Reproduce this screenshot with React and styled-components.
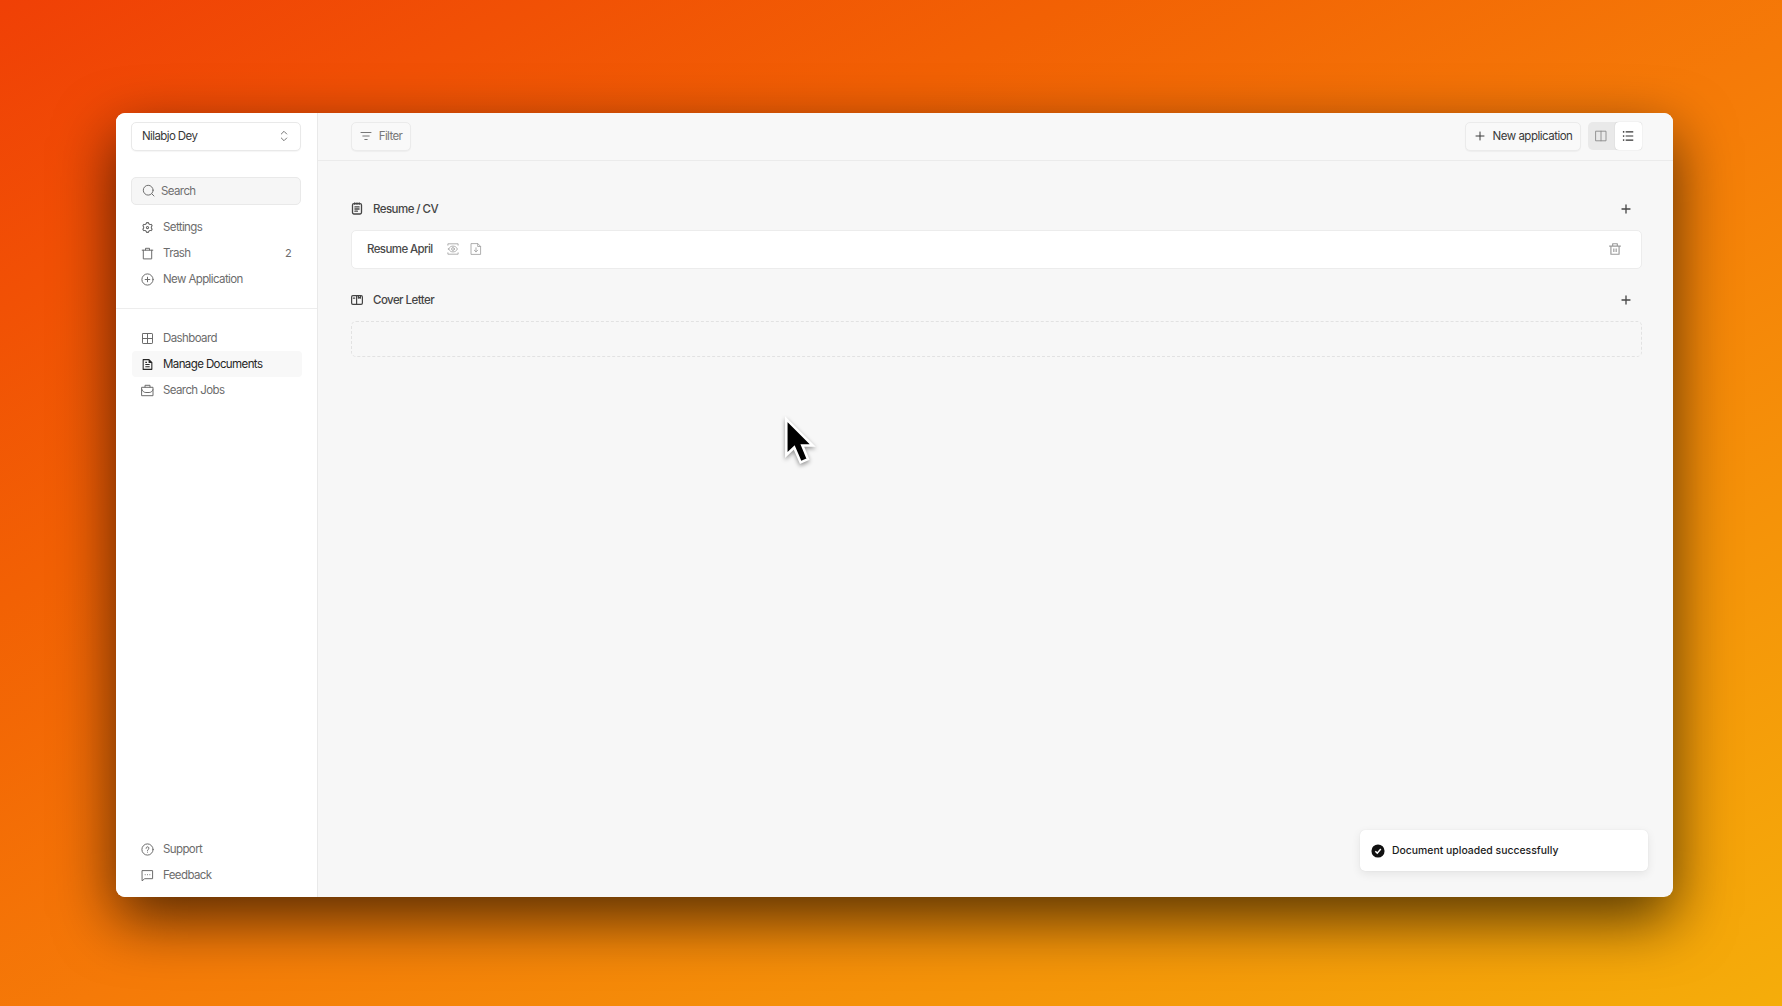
import React from "react";
import styled, { createGlobalStyle, css } from "styled-components";
import {
  RiSettings3Line,
  RiDeleteBinLine,
  RiFileTextLine,
  RiListUnordered,
} from "react-icons/ri";

const GlobalStyle = createGlobalStyle`
  * { box-sizing: border-box; }
  html, body { margin: 0; padding: 0; }
  body { font-family: Inter, "Liberation Sans", sans-serif; overflow: hidden; }
  button { font: inherit; letter-spacing: inherit; margin: 0; cursor: default; }
  svg { display: block; flex: none; }
`;

const Stage = styled.div`
  width: 100vw;
  height: 100vh;
  padding: 113px 109px 109px 116px;
  background: linear-gradient(to bottom right, #f04006 0%, #f26104 30%, #f57a08 52%, #f5ad0a 100%);
`;

const Window = styled.div`
  position: relative;
  display: flex;
  width: 100%;
  height: 100%;
  border-radius: 9px;
  background: #f7f7f7;
  box-shadow: 0 22px 60px rgba(0, 0, 0, 0.66);
  color: #3c3c3c;
  font-size: 11.5px;
  letter-spacing: -0.6px;
`;

const Sidebar = styled.aside`
  display: flex;
  flex-direction: column;
  width: 202px;
  flex: none;
  background: #fff;
  border-right: 1px solid #e9e9e9;
  border-radius: 9px 0 0 9px;
  padding-bottom: 9px;
`;

const SidebarTop = styled.div`
  height: 196px;
  padding: 9px 16px 0 15px;
  border-bottom: 1px solid #ededed;
`;

const fieldBox = css`
  display: flex;
  align-items: center;
  width: 100%;
  border: 1px solid #e9e9e9;
  border-radius: 5px;
`;

const AccountSelect = styled.button`
  ${fieldBox}
  justify-content: space-between;
  height: 29px;
  padding: 0 12px 1px 10px;
  background: #fff;
  color: #383838;
  box-shadow: 0 1px 1px rgba(0, 0, 0, 0.04);

  svg { color: #777; }
`;

const SearchField = styled.button`
  ${fieldBox}
  gap: 6px;
  height: 28px;
  margin: 26px 0 9px;
  padding: 0 10px 1px;
  background: #f6f6f6;
  color: #707070;
`;

const Nav = styled.nav`
  display: flex;
  flex-direction: column;
`;

const SidebarGroup = styled(Nav)`
  padding: 0 15px 0 16px;
  ${(p) => (p.$bottom ? "margin-top: auto;" : "margin-top: 16px;")}
`;

const NavItem = styled.a`
  display: flex;
  align-items: center;
  gap: 9px;
  height: 26px;
  padding: 0 10px 0 ${(p) => (p.$inset ? "10px" : "9px")};
  border-radius: 4px;
  color: ${(p) => (p.$active ? "#262626" : "#6c6c6c")};
  background: ${(p) => (p.$active ? "#f8f8f8" : "transparent")};
`;

const Count = styled.span`
  margin-left: auto;
  font-size: 11px;
`;

const Main = styled.main`
  flex: 1;
  min-width: 0;
  display: flex;
  flex-direction: column;
`;

const Toolbar = styled.header`
  display: flex;
  align-items: flex-start;
  height: 48px;
  padding: 9px 31px 0 33px;
  background: #f8f8f8;
  border-bottom: 1px solid #ebebeb;
  border-radius: 0 9px 0 0;
`;

const ToolButton = styled.button`
  display: flex;
  align-items: center;
  justify-content: center;
  gap: ${(p) => p.$gap};
  width: ${(p) => p.$width};
  height: 29px;
  padding: 0 0 1px;
  border: 1px solid #ebebeb;
  border-radius: 5px;
  background: #f9f9f9;
  color: ${(p) => p.$color};
  box-shadow: 0 1px 1px rgba(0, 0, 0, 0.04);
  ${(p) => p.$end && "margin-left: auto; padding-left: 1px; letter-spacing: -0.5px;"}
`;

const ViewToggle = styled.div`
  display: flex;
  width: 54px;
  height: 28px;
  margin-left: 7px;
  border-radius: 5px;
  background: #e9e9e9;
`;

const ViewOption = styled.button`
  display: flex;
  align-items: center;
  justify-content: center;
  width: 27px;
  height: 28px;
  padding: 0 1px 0 0;
  border: 0;
  border-radius: 4px;
  background: ${(p) => (p.$selected ? "#fff" : "transparent")};
  color: ${(p) => (p.$selected ? "#333" : "#8a8a8a")};
  ${(p) => p.$selected && "box-shadow: 0 0 1px rgba(0, 0, 0, 0.25);"}
`;

const Content = styled.div`
  padding: 34px 31px 0 33px;
`;

const SectionHeader = styled.div`
  display: flex;
  align-items: center;
  gap: 10px;
  height: 27px;
  margin-bottom: 8px;
  padding-right: 11px;
  font-weight: 500;
  letter-spacing: -0.55px;
  color: #454545;

  svg:last-child { margin-left: auto; }
`;

const DocumentRow = styled.div`
  display: flex;
  align-items: center;
  height: 39px;
  margin-bottom: 17px;
  padding: 0 19px 1px 15px;
  border: 1px solid #ececec;
  border-radius: 5px;
  background: #fff;
  font-weight: 500;
  color: #4a4a4a;
`;

const RowActions = styled.div`
  display: flex;
  align-items: center;
  flex: 1;
  gap: 11px;
  padding-left: 14px;
  color: #9a9a9a;

  svg:last-child { margin-left: auto; }
`;

const EmptySlot = styled.div`
  height: 36px;
  border: 1px dashed #e2e2e2;
  border-radius: 5px;
`;

const Toast = styled.div`
  position: absolute;
  right: 25px;
  bottom: 26px;
  display: flex;
  align-items: center;
  gap: 7px;
  width: 288px;
  height: 41px;
  padding: 0 12px 0 11px;
  border-radius: 5px;
  background: #fff;
  color: #1b1b1b;
  font-size: 10.4px;
  font-weight: 500;
  letter-spacing: 0.02px;
  box-shadow: 0 3px 10px rgba(0, 0, 0, 0.08), 0 0 1px rgba(0, 0, 0, 0.12);
`;

const Pointer = styled.svg`
  position: absolute;
  left: 664px;
  top: 298px;
  filter: drop-shadow(0 2px 2px rgba(0, 0, 0, 0.4));
`;

const Icon = ({ w = 12, h = w, box = "0 0 24 24", stroke = 1.8, children }) => (
  <svg
    width={w}
    height={h}
    viewBox={box}
    fill="none"
    stroke="currentColor"
    strokeWidth={stroke}
    strokeLinecap="round"
    strokeLinejoin="round"
  >
    {children}
  </svg>
);

const ChevronsIcon = () => (
  <Icon w={8} h={12} box="0 0 8 12" stroke={1}>
    <path d="M1.3 4 4 1.3 6.7 4M1.3 8 4 10.7 6.7 8" />
  </Icon>
);
const SearchIcon = () => (
  <Icon w={13} box="0 0 13 13" stroke={1}>
    <circle cx="6.2" cy="6.2" r="4.9" />
    <path d="m9.8 9.8 2.2 2.2" />
  </Icon>
);
const TrashIcon = () => (
  <Icon w={13} box="-.5 -.5 13 13" stroke={1}>
    <path d="M.7 2.7h10.600M1.800 2.700V11.400h8.400V2.700M4 2.500V.8h4v1.700" />
  </Icon>
);
const PlusCircleIcon = () => (
  <Icon w={13} box="-.5 -.5 13 13" stroke={1}>
    <circle cx="6" cy="6" r="5.6" />
    <path d="M6 3.700v4.600M3.700 6h4.600" />
  </Icon>
);
const GridIcon = () => (
  <Icon w={13} box="-.5 -.5 13 13" stroke={1}>
    <rect x="1" y="1" width="10" height="10" rx="0.6" />
    <path d="M6 1v10M1 6h10" />
  </Icon>
);
const BriefcaseIcon = () => (
  <Icon w={13} box="-.5 -.5 13 13" stroke={1}>
    <path d="M.5 2.800h11v8.400H.5zM3.500 2.600V.8h5v1.800M.6 5.200C1.200 7.200 2.700 8 4.400 8h3.200C9.300 8 10.800 7.200 11.400 5.200" />
  </Icon>
);
const HelpIcon = () => (
  <Icon w={13} box="-.5 -.5 13 13" stroke={1}>
    <circle cx="6" cy="6" r="5.6" />
    <path d="M4.600 4.800A1.400 1.400 0 1 1 6.600 6Q6 6.300 6 7M6 8.600v.1" />
  </Icon>
);
const FeedbackIcon = () => (
  <Icon w={13} box="-.5 -.5 13 13" stroke={1}>
    <path d="M.9 1.100h10.200v8.100H3.200L.9 11.100z" />
    <path d="M3.700 5.200v.1M6 5.200v.1M8.300 5.200v.1" />
  </Icon>
);
const FilterIcon = () => (
  <Icon box="0 0 12 12" stroke={1}>
    <path d="M1 2.500h10M2.800 6h6.400M4.800 9.500h2.400" />
  </Icon>
);
const PlusIcon = ({ stroke = 1.1 }) => (
  <Icon w={10} box="0 0 10 10" stroke={stroke}>
    <path d="M5 1v8M1 5h8" />
  </Icon>
);
const ColumnsIcon = () => (
  <Icon box="0 0 12 12" stroke={0.9}>
    <path d="M1 1.200h10v9.600H1zM6 1.200v9.600" />
  </Icon>
);
const NotepadIcon = () => (
  <Icon w={12} h={13} box="0 0 12 13" stroke={1.3}>
    <rect x="1.500" y="1.700" width="9" height="10.300" rx="1.400" />
    <path d="M3.800.8v1.500M6 .8v1.500M8.200.8v1.500M3.900 4.900h4.200M3.900 7h4.200M3.900 9.200h2.500" />
  </Icon>
);
const LetterIcon = () => (
  <Icon box="0 0 12 12" stroke={1.2}>
    <rect x=".6" y="1.700" width="10.800" height="8.600" rx="1.300" />
    <path d="M5.600 1.700v8.600M2.400 4.200h1.300M7.400 1.900v2.300l1-.7 1 .7V1.900" />
  </Icon>
);
const PreviewIcon = () => (
  <Icon box="0 0 12 12" stroke={0.8}>
    <path d="M.9 2.200V.8h10.200v1.400M.9 9.800v1.400h10.200V9.800" />
    <path d="M1.600 6C2.500 4.100 4 3.100 6 3.100S9.500 4.100 10.400 6C9.500 7.900 8 8.900 6 8.900S2.500 7.900 1.600 6z" />
    <circle cx="6" cy="6" r="1.4" />
  </Icon>
);
const DownloadIcon = () => (
  <Icon box="0 0 12 12" stroke={0.8}>
    <path d="M1.400.6h6.400l2.800 2.800v8H1.400zM7.700.8v2.700h2.700M6 4.800v4M4.300 7.200 6 8.900l1.700-1.700" />
  </Icon>
);
const CheckBadge = () => (
  <svg width="14" height="14" viewBox="0 0 13 13">
    <circle cx="6.5" cy="6.5" r="6.1" fill="#111" />
    <path d="m4 6.800 1.800 1.700 3.300-3.900" fill="none" stroke="#fff" strokeWidth="1.4" />
  </svg>
);

const mainLinks = [
  { label: "Dashboard", icon: <GridIcon /> },
  { label: "Manage Documents", icon: <RiFileTextLine size={13} />, active: true },
  { label: "Search Jobs", icon: <BriefcaseIcon /> },
];
const helpLinks = [
  { label: "Support", icon: <HelpIcon /> },
  { label: "Feedback", icon: <FeedbackIcon /> },
];
const quickLinks = [
  { label: "Settings", icon: <RiSettings3Line size={13} /> },
  { label: "Trash", icon: <TrashIcon />, count: 2 },
  { label: "New Application", icon: <PlusCircleIcon /> },
];

const NavLinks = ({ links, inset }) =>
  links.map((l) => (
    <NavItem key={l.label} $active={l.active} $inset={inset}>
      {l.icon}
      <span>{l.label}</span>
      {l.count && <Count>{l.count}</Count>}
    </NavItem>
  ));

export default function App() {
  return (
    <Stage>
      <GlobalStyle />
      <Window>
        <Sidebar>
          <SidebarTop>
            <AccountSelect>
              <span>Nilabjo Dey</span>
              <ChevronsIcon />
            </AccountSelect>
            <SearchField>
              <SearchIcon />
              <span>Search</span>
            </SearchField>
            <Nav>
              <NavLinks links={quickLinks} inset />
            </Nav>
          </SidebarTop>
          <SidebarGroup>
            <NavLinks links={mainLinks} />
          </SidebarGroup>
          <SidebarGroup $bottom>
            <NavLinks links={helpLinks} />
          </SidebarGroup>
        </Sidebar>
        <Main>
          <Toolbar>
            <ToolButton $width="60px" $gap="7px" $color="#777">
              <FilterIcon />
              <span>Filter</span>
            </ToolButton>
            <ToolButton $width="116px" $gap="8px" $color="#3a3a3a" $end>
              <PlusIcon stroke={1} />
              <span>New application</span>
            </ToolButton>
            <ViewToggle>
              <ViewOption>
                <ColumnsIcon />
              </ViewOption>
              <ViewOption $selected>
                <RiListUnordered size={14} />
              </ViewOption>
            </ViewToggle>
          </Toolbar>
          <Content>
            <SectionHeader>
              <NotepadIcon />
              <span>Resume / CV</span>
              <PlusIcon stroke={1.3} />
            </SectionHeader>
            <DocumentRow>
              <span>Resume April</span>
              <RowActions>
                <PreviewIcon />
                <DownloadIcon />
                <RiDeleteBinLine size={14} />
              </RowActions>
            </DocumentRow>
            <SectionHeader>
              <LetterIcon />
              <span>Cover Letter</span>
              <PlusIcon stroke={1.3} />
            </SectionHeader>
            <EmptySlot />
          </Content>
        </Main>
        <Toast>
          <CheckBadge />
          <span>Document uploaded successfully</span>
        </Toast>
        <Pointer width="42" height="58" viewBox="0 0 42 58">
          <path
            d="M6.300 8.200V44l7.900-7.500 6.400 14.800 7.400-3.100-5.700-13.700h10.500z"
            fill="#000"
            stroke="#fff"
            strokeWidth="2.5"
          />
        </Pointer>
      </Window>
    </Stage>
  );
}
